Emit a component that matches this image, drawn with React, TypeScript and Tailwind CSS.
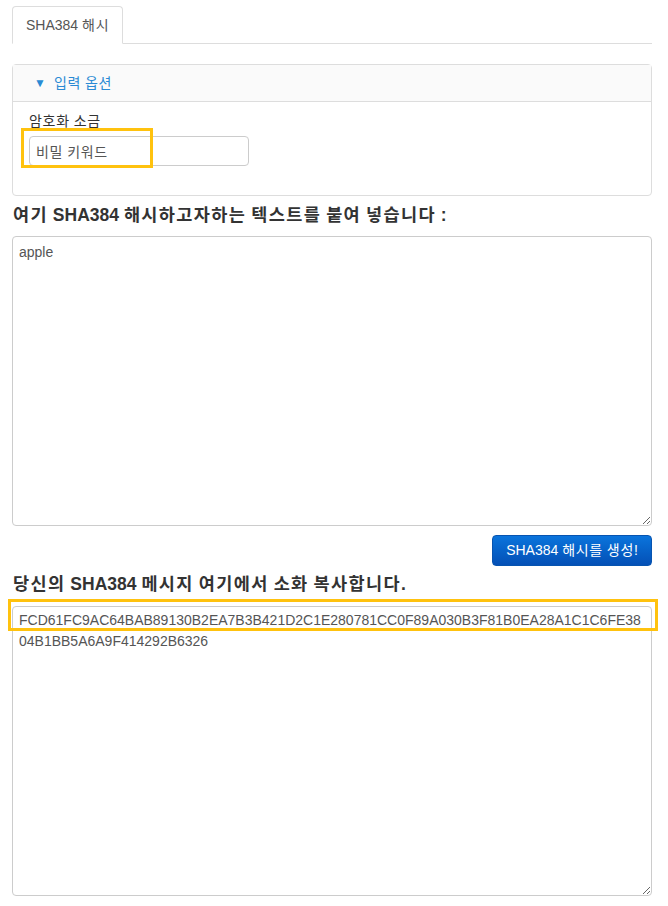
import { ReactNode } from "react"

const font = { fontFamily: '"Liberation Sans", "Noto Sans CJK KR", sans-serif' }

const hash =
  "FCD61FC9AC64BAB89130B2EA7B3B421D2C1E280781CC0F89A030B3F81B0EA28A1C1C6FE3804B1BB5A6A9F414292B6326"

// hangul in the screenshot font runs a bit wider than Noto CJK, so loosen those runs only
function Ko({ text, wide }: { text: string; wide?: boolean }) {
  const parts = text.split(/([\uAC00-\uD7A3]+)/)
  return (
    <>
      {parts.map((part, i) =>
        /[\uAC00-\uD7A3]/.test(part) ? (
          <span key={i} className={wide ? "tracking-[0.08em]" : "tracking-[0.05em]"}>
            {part}
          </span>
        ) : (
          part
        )
      )}
    </>
  )
}

function Highlight({ className }: { className: string }) {
  return <div className={`pointer-events-none absolute border-[3px] border-[#ffc20e] ${className}`} />
}

function Heading({ children, className }: { children: string; className: string }) {
  return (
    <h2 className={`pl-px text-[17.5px] font-bold leading-[24px] text-[#333] ${className}`}>
      <Ko text={children} wide />
    </h2>
  )
}

export default function App() {
  return (
    <div className="min-h-[906px] bg-white pl-3 pr-4 text-[14px] text-[#333]" style={font}>
      {/* tabs */}
      <div className="flex border-b border-[#ddd] pt-[6px]">
        <div className="-mb-px rounded-t-[4px] border border-b-white border-[#ddd] bg-white px-[13px] py-[9px] leading-[18px] text-[#555]">
          <Ko text="SHA384 해시" />
        </div>
      </div>

      {/* options panel */}
      <div className="mt-5 rounded-[4px] border border-[#ddd]">
        <div className="flex items-center gap-[8px] border-b border-[#ddd] bg-[#fafafa] px-[21px] py-[9px] leading-[18px] text-[#2a8ad4]">
          <span className="text-[12px]">▼</span>
          <span>
            <Ko text="입력 옵션" />
          </span>
        </div>
        <div className="px-4 pb-[29px] pt-[9px]">
          <p className="leading-[20px]">
            <Ko text="암호화 소금" />
          </p>
          <div className="relative mt-[5px] w-[220px]">
            <input
              defaultValue="비밀 키워드"
              className="h-[30px] w-full rounded-[4px] border border-[#ccc] px-[6px] text-[14px] tracking-[0.04em] text-[#555] outline-none"
              style={font}
            />
            <Highlight className="-left-2 -top-2 h-[40px] w-[132px]" />
          </div>
        </div>
      </div>

      <Heading className="mt-[7px]">여기 SHA384 해시하고자하는 텍스트를 붙여 넣습니다 :</Heading>
      <textarea
        defaultValue="apple"
        className="mt-[9px] block h-[290px] w-full rounded-[4px] border border-[#ccc] px-[6px] py-[5px] text-[14px] leading-[20px] text-[#555] outline-none"
        style={font}
      />

      <div className="mt-[9px] flex justify-end">
        <button
          type="button"
          className="h-[31px] w-[160px] rounded-[4px] border border-[#0754b0] bg-gradient-to-b from-[#0b74dc] to-[#0550b6] text-[14px] text-white"
        >
          <Ko text="SHA384 해시를 생성!" />
        </button>
      </div>

      <Heading className="mt-[6px]">당신의 SHA384 메시지 여기에서 소화 복사합니다.</Heading>
      <div className="relative mt-[10px]">
        <textarea
          readOnly
          defaultValue={hash}
          className="block h-[290px] w-full break-all rounded-[4px] border border-[#ccc] px-[6px] py-[3px] text-[14px] leading-[21px] text-[#555] outline-none"
          style={font}
        />
        <Highlight className="-left-1 -top-[7px] h-[32px] w-[650px]" />
      </div>
    </div>
  )
}
